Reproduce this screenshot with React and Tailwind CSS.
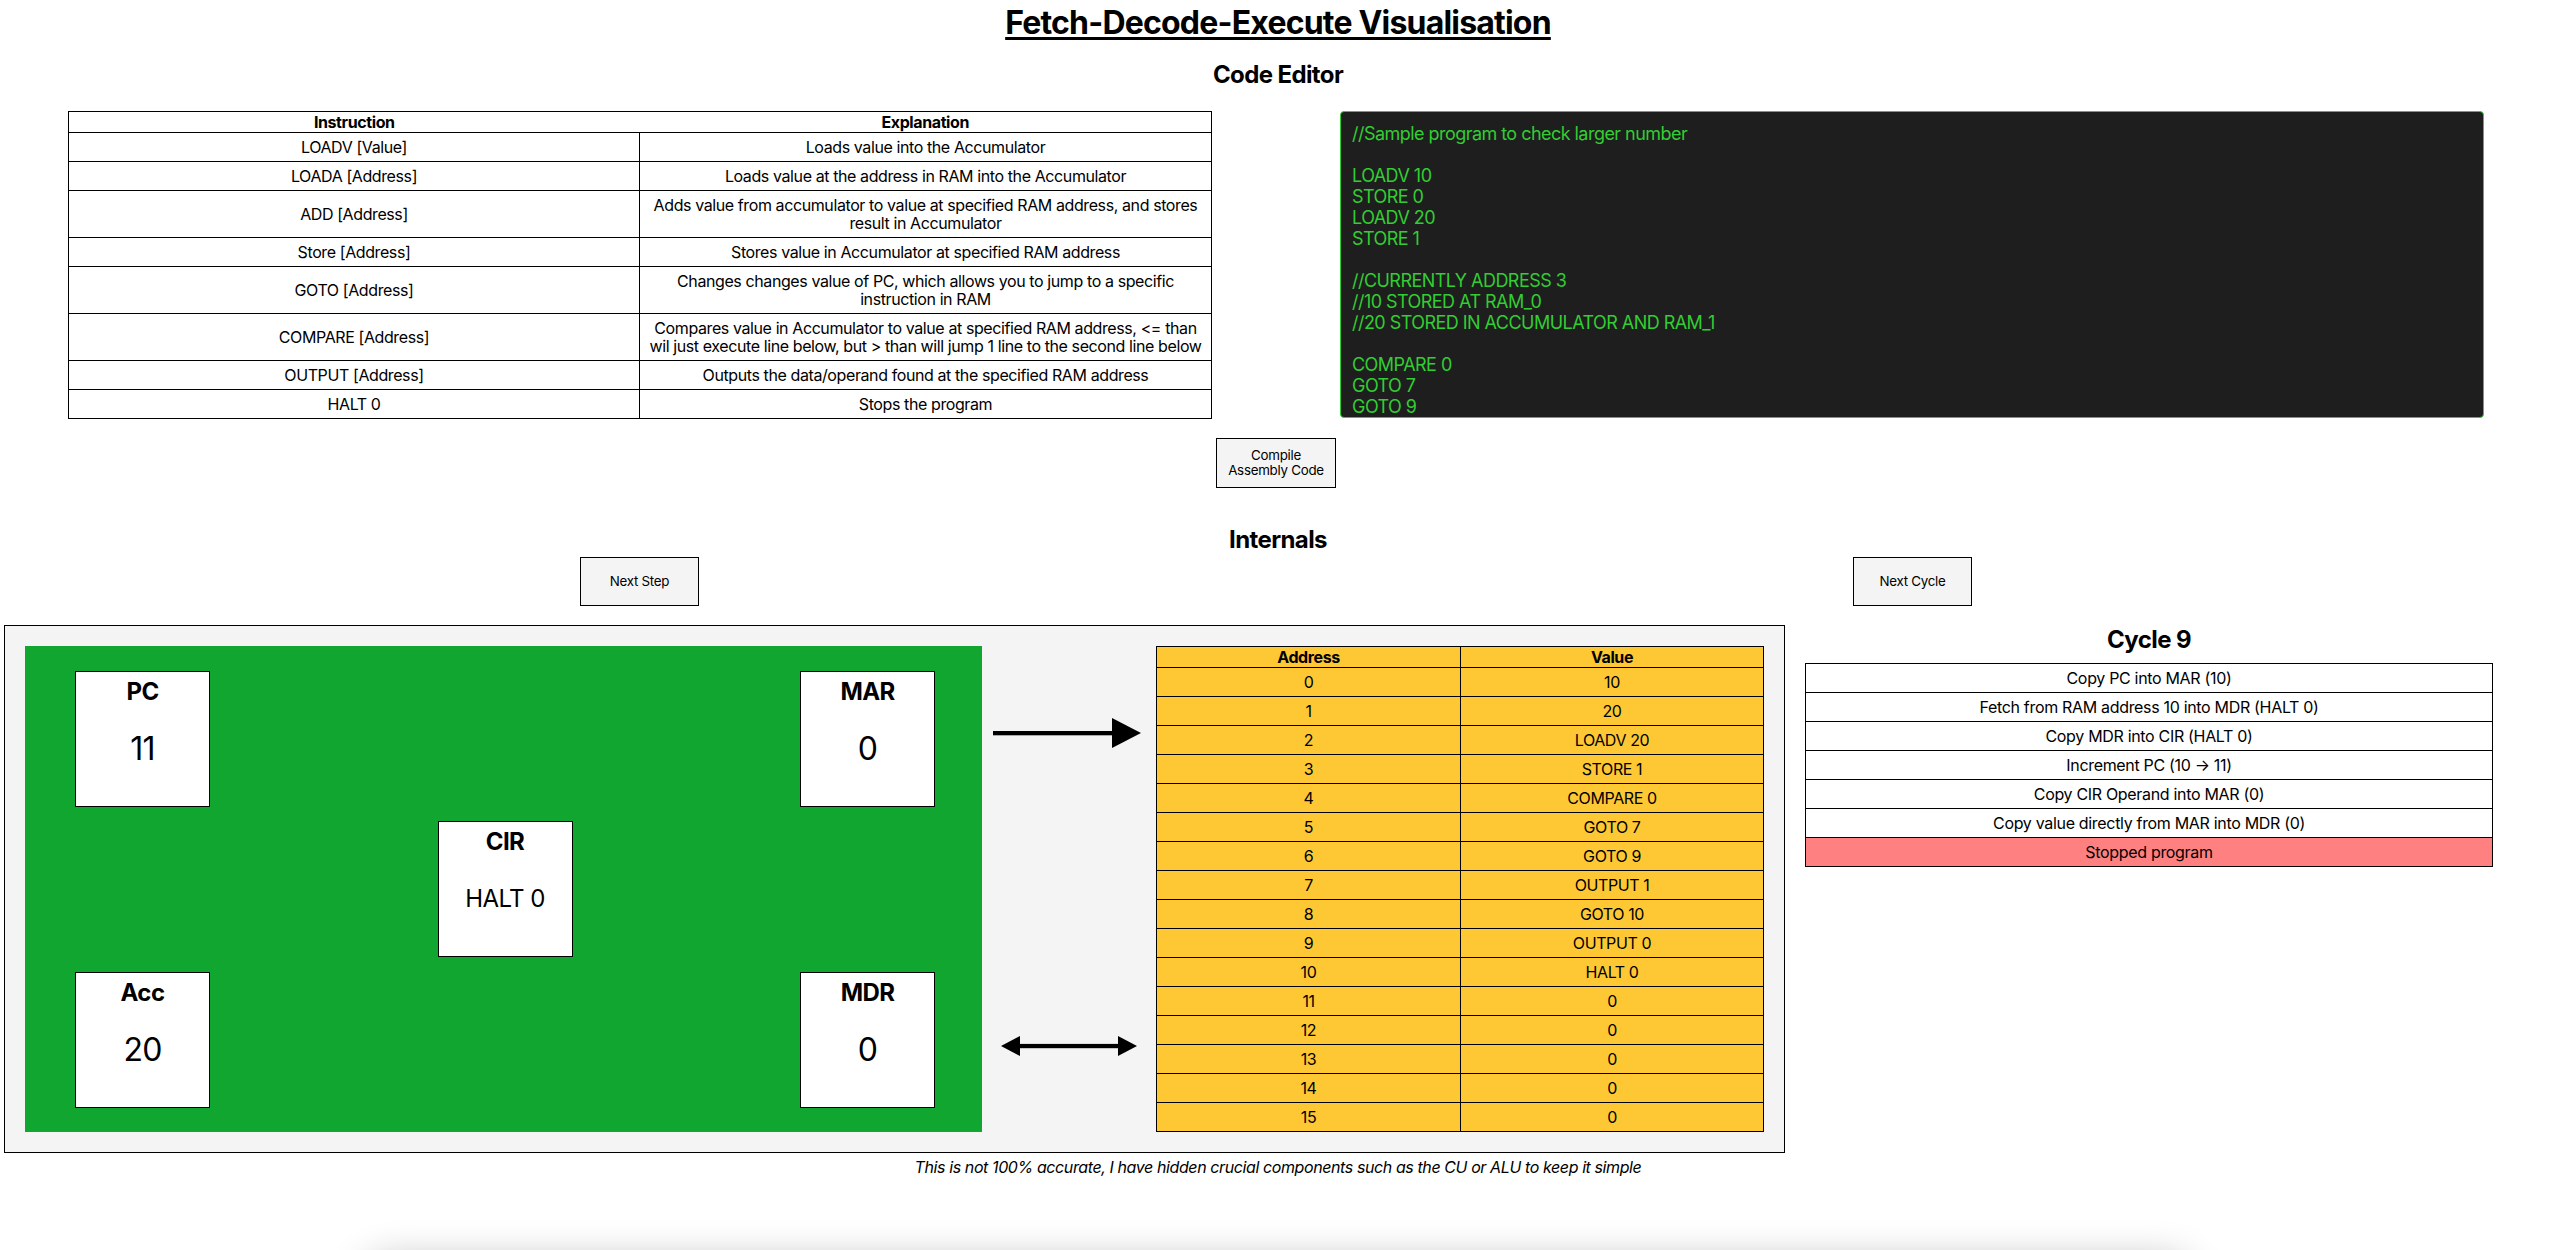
import React from "react";

const instructions = [
  ["LOADV [Value]", ["Loads value into the Accumulator"]],
  ["LOADA [Address]", ["Loads value at the address in RAM into the Accumulator"]],
  ["ADD [Address]", ["Adds value from accumulator to value at specified RAM address, and stores", "result in Accumulator"]],
  ["Store [Address]", ["Stores value in Accumulator at specified RAM address"]],
  ["GOTO [Address]", ["Changes changes value of PC, which allows you to jump to a specific", "instruction in RAM"]],
  ["COMPARE [Address]", ["Compares value in Accumulator to value at specified RAM address, <= than", "wil just execute line below, but > than will jump 1 line to the second line below"]],
  ["OUTPUT [Address]", ["Outputs the data/operand found at the specified RAM address"]],
  ["HALT 0", ["Stops the program"]],
];

const ram = ["10", "20", "LOADV 20", "STORE 1", "COMPARE 0", "GOTO 7", "GOTO 9", "OUTPUT 1", "GOTO 10", "OUTPUT 0", "HALT 0", "0", "0", "0", "0", "0"];

const cycle = [
  "Copy PC into MAR (10)",
  "Fetch from RAM address 10 into MDR (HALT 0)",
  "Copy MDR into CIR (HALT 0)",
  "Increment PC (10 \u2192 11)",
  "Copy CIR Operand into MAR (0)",
  "Copy value directly from MAR into MDR (0)",
];

const code = `//Sample program to check larger number

LOADV 10
STORE 0
LOADV 20
STORE 1

//CURRENTLY ADDRESS 3
//10 STORED AT RAM_0
//20 STORED IN ACCUMULATOR AND RAM_1

COMPARE 0
GOTO 7
GOTO 9
OUTPUT 1
GOTO 10
OUTPUT 0
HALT 0`;

function Reg({ name, value, small }) {
  return (
    <div className="w-[135px] h-[136px] bg-white border border-black flex flex-col items-center text-black">
      <div className="mt-[5px] text-[24px] leading-[29px] font-bold tracking-[-0.025em]">{name}</div>
      {small ? (
        <div className="mt-[28px] text-[24px] leading-[29px] tracking-[-0.025em]">{value}</div>
      ) : (
        <div className="mt-[23px] text-[32px] leading-[39px] tracking-[-0.025em]">{value}</div>
      )}
    </div>
  );
}

export default function App() {
  return (
    <div className="w-[2556px] min-h-[1250px] bg-white text-black font-['Inter',sans-serif] overflow-hidden">
      <h1 className="pt-[4px] text-center text-[32px] leading-[38px] font-bold underline underline-offset-[3px] tracking-[-0.025em]">
        Fetch-Decode-Execute Visualisation
      </h1>
      <h2 className="mt-[18px] text-center text-[24px] leading-[29px] font-bold tracking-[-0.025em]">Code Editor</h2>

      <div className="mt-[22px] flex items-start pl-[68px] gap-[128px]">
        <table className="w-[1144px] border-collapse border border-black text-[16px] leading-[18px] table-fixed tracking-[-0.025em]">
          <thead>
            <tr>
              <th className="py-[1px] font-bold w-[571px]">Instruction</th>
              <th className="py-[1px] font-bold">Explanation</th>
            </tr>
          </thead>
          <tbody>
            {instructions.map(([ins, exp]) => (
              <tr key={ins}>
                <td className="border border-black py-[5px] text-center align-middle">{ins}</td>
                <td className="border border-black py-[5px] text-center align-middle whitespace-nowrap">
                  {exp.map((l, i) => (
                    <div key={i}>{l}</div>
                  ))}
                </td>
              </tr>
            ))}
          </tbody>
        </table>

        <div className="w-[1144px] h-[307px] bg-[#1e1e1e] border border-[#32cd32] rounded-[4px] p-[11px] overflow-hidden">
          <div className="whitespace-pre text-[18px] leading-[21px] text-[#32cd32] tracking-[-0.03em]">{code}</div>
        </div>
      </div>

      <button className="block mt-[19px] ml-[1216px] w-[120px] h-[50px] bg-[#f4f4f4] border border-black text-[13.33px] leading-[15px] text-black tracking-[-0.02em]">
        Compile
        <br />
        Assembly Code
      </button>

      <h2 className="mt-[37px] text-center text-[24px] leading-[29px] font-bold tracking-[-0.025em]">Internals</h2>

      <div className="mt-[3px] flex pl-[580px] gap-[1154px]">
        <button className="w-[119px] h-[49px] bg-[#f4f4f4] border border-black text-[13.33px] text-black tracking-[-0.02em]">Next Step</button>
        <button className="w-[119px] h-[49px] bg-[#f4f4f4] border border-black text-[13.33px] text-black tracking-[-0.02em]">Next Cycle</button>
      </div>

      <div className="mt-[19px] flex items-start">
        <div className="ml-[4px] w-[1781px] h-[528px] border border-black bg-[#f4f4f4] flex items-start pt-[20px] pl-[20px]">
          <div className="w-[957px] h-[486px] bg-[#10a630] pt-[25px] pl-[50px] pr-[47px] flex flex-col">
            <div className="flex justify-between">
              <Reg name="PC" value="11" />
              <Reg name="MAR" value="0" />
            </div>
            <div className="flex justify-center mt-[14px]">
              <Reg name="CIR" value="HALT 0" small />
            </div>
            <div className="flex justify-between mt-[15px]">
              <Reg name="Acc" value="20" />
              <Reg name="MDR" value="0" />
            </div>
          </div>

          <div className="w-[174px] h-[486px] flex flex-col">
            <svg className="ml-[11px] mt-[72px]" width="148" height="30" viewBox="0 0 148 30">
              <rect x="0" y="13" width="121" height="4.3" fill="#000" />
              <polygon points="119,0 148,15 119,30" fill="#000" />
            </svg>
            <svg className="ml-[19px] mt-[288px]" width="136" height="20" viewBox="0 0 136 20">
              <rect x="18" y="7.9" width="100" height="4.3" fill="#000" />
              <polygon points="0,10 19,0 19,20" fill="#000" />
              <polygon points="136,10 117,0 117,20" fill="#000" />
            </svg>
          </div>

          <table className="w-[608px] border-collapse border border-black bg-[#fec834] text-[16px] leading-[18px] table-fixed tracking-[-0.025em]">
            <thead>
              <tr>
                <th className="border border-black py-[1px] font-bold w-[304px]">Address</th>
                <th className="border border-black py-[1px] font-bold">Value</th>
              </tr>
            </thead>
            <tbody>
              {ram.map((v, i) => (
                <tr key={i}>
                  <td className="border border-black py-[5px] text-center">{i}</td>
                  <td className="border border-black py-[5px] text-center">{v}</td>
                </tr>
              ))}
            </tbody>
          </table>
        </div>

        <div className="ml-[20px] w-[688px] flex flex-col">
          <h2 className="text-center text-[24px] leading-[29px] font-bold tracking-[-0.025em]">Cycle 9</h2>
          <table className="mt-[9px] w-full border-collapse border border-black text-[16px] leading-[18px] tracking-[-0.02em]">
            <tbody>
              {cycle.map((c) => (
                <tr key={c}>
                  <td className="border border-black py-[5px] text-center bg-white">{c}</td>
                </tr>
              ))}
              <tr>
                <td className="border border-black py-[5px] text-center bg-[#ff8080]">Stopped program</td>
              </tr>
            </tbody>
          </table>
        </div>
      </div>

      <p className="mt-[5px] text-center italic text-[16px] leading-[19px] tracking-[-0.025em]">
        This is not 100% accurate, I have hidden crucial components such as the CU or ALU to keep it simple
      </p>

      <div className="mt-[86px] ml-[370px] w-[1815px] h-[300px] bg-white rounded-[12px] shadow-[0_0_40px_rgba(0,0,0,0.32)]"></div>
    </div>
  );
}
